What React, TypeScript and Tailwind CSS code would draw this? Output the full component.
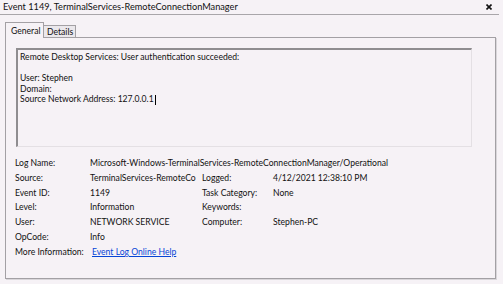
import React from 'react'

const rows: { label: string; value: React.ReactNode; label2?: string; value2?: string; wide?: boolean }[] = [
  { label: 'Log Name:', value: 'Microsoft-Windows-TerminalServices-RemoteConnectionManager/Operational', wide: true },
  { label: 'Source:', value: 'TerminalServices-RemoteCo', label2: 'Logged:', value2: '4/12/2021 12:38:10 PM' },
  { label: 'Event ID:', value: '1149', label2: 'Task Category:', value2: 'None' },
  { label: 'Level:', value: 'Information', label2: 'Keywords:', value2: '' },
  { label: 'User:', value: 'NETWORK SERVICE', label2: 'Computer:', value2: 'Stephen-PC' },
  { label: 'OpCode:', value: 'Info' },
]

export default function App() {
  return (
    <div className="w-[503px] h-[284px] overflow-hidden bg-[#f6f2f6] text-[#111] font-['Lato',sans-serif] text-[8.6px] leading-none">
      {/* Title bar */}
      <div className="flex items-center h-[15px] mr-[4px] border-b border-[#a9a6aa]">
        <span className="pl-[3px] text-[9.2px]">Event 1149, TerminalServices-RemoteConnectionManager</span>
        <svg className="ml-auto mr-[7px]" width="6" height="6" viewBox="0 0 6 6">
          <path d="M0.5 0.5 L5.5 5.5 M5.5 0.5 L0.5 5.5" stroke="#111" strokeWidth="1.6" />
        </svg>
      </div>

      {/* Tabs */}
      <div className="flex items-end pl-[5px] pt-[6px] h-[22px]">
        <div className="relative z-10 h-[16px] w-[39px] -mb-px bg-[#f6f2f6] border border-b-0 border-[#a3a0a4] pl-[5px] pt-[4px]">
          General
        </div>
        <div className="h-[12px] w-[32px] border border-l-0 border-b-0 border-[#a3a0a4] bg-[#ebe8ec] pl-[3px] pt-[2px]">
          Details
        </div>
      </div>

      {/* Tab panel */}
      <div className="ml-[5px] w-[491px] h-[242px] border border-[#a3a0a4] shadow-[1px_1px_0_#d9d6da] pt-[10px] pl-[10px]">
        <div className="w-[456px] h-[99px] border-l-2 border-t-2 border-[#8f8d90] border-r border-b border-r-[#e4e0e4] border-b-[#e4e0e4] pl-[2px] pt-[2px] leading-[10.6px]">
          <div>Remote Desktop Services: User authentication succeeded:</div>
          <div>&nbsp;</div>
          <div>User: Stephen</div>
          <div>Domain:</div>
          <div className="flex items-center">
            Source Network Address: 127.0.0.1
            <span className="inline-block w-px h-[10px] bg-black ml-px" />
          </div>
        </div>

        <div className="mt-[9px] -ml-[1px] grid grid-cols-[75px_112px_71px_1fr] auto-rows-[14.8px] items-center">
          {rows.map((r) => (
            <React.Fragment key={r.label}>
              <div>{r.label}</div>
              {r.wide ? (
                <div className="col-span-3 whitespace-nowrap">{r.value}</div>
              ) : (
                <>
                  <div className="whitespace-nowrap">{r.value}</div>
                  <div>{r.label2 ?? ''}</div>
                  <div>{r.value2 ?? ''}</div>
                </>
              )}
            </React.Fragment>
          ))}
          <div className="whitespace-nowrap">More Information:</div>
          <div className="col-span-3 pl-[2px]">
            <a href="#" className="text-[#0645d6] underline">Event Log Online Help</a>
          </div>
        </div>
      </div>
    </div>
  )
}
